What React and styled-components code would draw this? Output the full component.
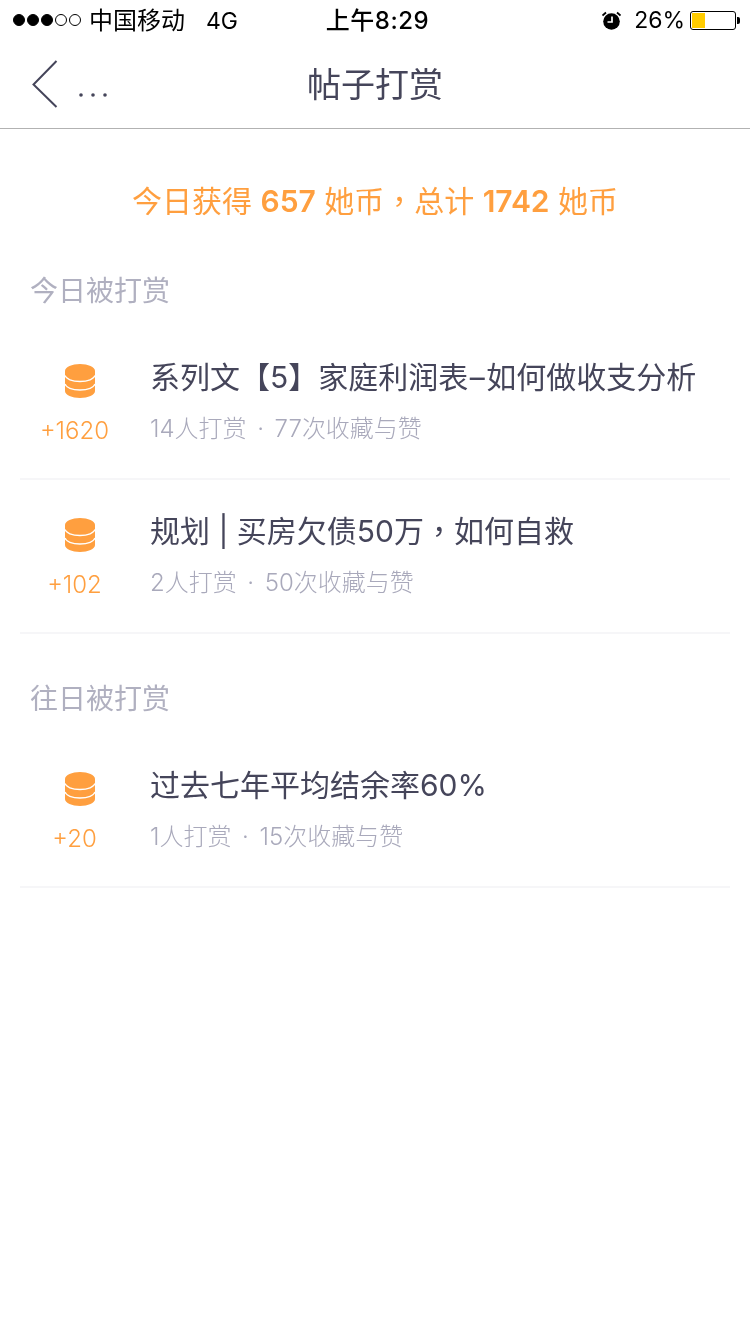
import React from 'react';
import styled, { createGlobalStyle } from 'styled-components';

const GlobalStyle = createGlobalStyle`
  html, body {
    margin: 0;
    padding: 0;
    background: #fff;
  }
  body {
    font-family: Inter, "Noto Sans CJK SC", sans-serif;
    font-weight: 400;
  }
`;

const Page = styled.div`
  width: 750px;
  height: 1334px;
  overflow: hidden;
  will-change: transform;
`;

const StatusBar = styled.div`
  height: 40px;
  box-sizing: border-box;
  padding: 0 14px 4px 13px;
  display: grid;
  grid-template-columns: 1fr auto 1fr;
  align-items: center;
  color: #000;
  font-size: 24px;
`;

const StatusLeft = styled.div`
  display: flex;
  align-items: baseline;
`;

const Signal = styled.div`
  display: flex;
  gap: 2px;
  margin-right: 8px;
  align-self: center;
  margin-top: 4px;
`;

const Dot = styled.span`
  width: 12px;
  height: 12px;
  border-radius: 50%;
  box-sizing: border-box;
  border: 1px solid #000;
  background: ${p => (p.$on ? '#000' : 'transparent')};
`;

const Network = styled.span`
  margin-left: 21px;
  font-size: 23px;
`;

const Clock = styled.div`
  margin-left: 6px;
  font-weight: 500;
  letter-spacing: 0.5px;
`;

const StatusRight = styled.div`
  display: flex;
  align-items: center;
  justify-content: flex-end;
  margin-top: 4px;
`;

const Percent = styled.span`
  margin: 0 5px 0 13px;
  font-size: 23px;
`;

const Battery = styled.div`
  width: 46px;
  height: 19px;
  box-sizing: border-box;
  border: 1px solid #000;
  border-radius: 3px;
  padding: 1px;
  position: relative;
  &::after {
    content: '';
    position: absolute;
    right: -5px;
    top: 5px;
    width: 3px;
    height: 7px;
    background: #000;
    border-radius: 0 2px 2px 0;
  }
`;

const BatteryFill = styled.div`
  width: 13px;
  height: 100%;
  background: #ffcc00;
`;

const NavBar = styled.div`
  height: 88px;
  border-bottom: 1px solid #b2b2b2;
  display: flex;
  align-items: center;
  justify-content: center;
  position: relative;
  color: #45455a;
`;

const NavBack = styled.div`
  position: absolute;
  left: 32px;
  top: 20px;
  display: flex;
  align-items: center;
  gap: 20px;
`;

const MoreDots = styled.svg`
  margin-top: 20px;
`;

const NavTitle = styled.div`
  font-size: 34px;
  line-height: 88px;
  padding-top: 2px;
`;

const Summary = styled.div`
  margin-top: 50px;
  height: 44px;
  line-height: 44px;
  text-align: center;
  font-size: 30px;
  color: #ff9f3f;
  b {
    font-weight: 600;
  }
`;

// the reference sets this comma centred in its cell, as the TC face does
const Comma = styled.span`
  font-family: "Noto Sans CJK TC", sans-serif;
  line-height: 0;
`;

const SectionTitle = styled.div`
  margin: ${p => p.$top}px 0 15px 30px;
  height: 40px;
  line-height: 40px;
  font-size: 28px;
  color: #b0b0c0;
`;

const Row = styled.div`
  margin: 0 20px;
  height: 154px;
  box-sizing: border-box;
  border-bottom: 2px solid #f6f6f8;
  display: flex;
`;

const Reward = styled.div`
  width: 110px;
  padding-top: 38px;
  display: flex;
  flex-direction: column;
  align-items: center;
  color: #ff9f3f;
  font-size: 24px;
  font-weight: 300;
`;

const Coin = styled.svg`
  margin-left: 10px;
`;

const Amount = styled.div`
  margin-top: 16px;
  margin-right: 1px;
  line-height: 34px;
`;

const Info = styled.div`
  margin-left: 20px;
  padding-top: 29px;
`;

const Title = styled.div`
  font-size: 30px;
  line-height: 44px;
  color: #45455a;
  white-space: nowrap;
`;

const Dash = styled.span`
  padding: 0 1.5px;
`;

const Meta = styled.div`
  margin-top: 13px;
  font-size: 24px;
  font-weight: 300;
  line-height: 34px;
  color: #a9a9bb;
  white-space: nowrap;
`;

const Sep = styled.span`
  display: inline-block;
  width: 28px;
  text-align: center;
`;

const CoinIcon = () => (
  <Coin width="30" height="34" viewBox="0 0 30 34">
    <path
      fill="#ff9f3f"
      d="M0 7C0 3 7 0 15 0s15 3 15 7v20c0 4-7 7-15 7S0 31 0 27z"
    />
    <path
      fill="none"
      stroke="#fff"
      strokeWidth="1.3"
      d="M0 11.500c1 3.500 7 6 15 6s14-2.500 15-6M0 20c1 3.500 7 6 15 6s14-2.500 15-6"
    />
  </Coin>
);

const AlarmIcon = () => (
  <svg width="19" height="19" viewBox="0 0 19 19">
    <circle cx="9.500" cy="10.500" r="8.300" fill="#000" />
    <path d="M10 5.500v5.500H5.500" fill="none" stroke="#fff" strokeWidth="1.7" />
    <path d="M.5 4.500L4 1.500M18.500 4.500L15 1.500" stroke="#000" strokeWidth="1.800" />
  </svg>
);

const BackIcon = () => (
  <svg width="26" height="50" viewBox="0 0 26 50">
    <path d="M24.500 1L1.500 24.500 24.500 47" fill="none" stroke="#45455a" strokeWidth="2" />
  </svg>
);

const MoreIcon = () => (
  <MoreDots width="30" height="6" viewBox="0 0 30 6">
    <circle cx="3" cy="3" r="1.800" fill="#45455a" />
    <circle cx="15" cy="3" r="1.800" fill="#45455a" />
    <circle cx="27" cy="3" r="1.800" fill="#45455a" />
  </MoreDots>
);

const today = [
  {
    amount: '+1620',
    title: <>系列文【5】家庭利润表<Dash>–</Dash>如何做收支分析</>,
    stats: ['14人打赏', '77次收藏与赞'],
  },
  {
    amount: '+102',
    title: <>规划 | 买房欠债50万<Comma>，</Comma>如何自救</>,
    stats: ['2人打赏', '50次收藏与赞'],
  },
];

const past = [
  { amount: '+20', title: '过去七年平均结余率60%', stats: ['1人打赏', '15次收藏与赞'] },
];

const RewardRow = ({ item }) => (
  <Row>
    <Reward>
      <CoinIcon />
      <Amount>{item.amount}</Amount>
    </Reward>
    <Info>
      <Title>{item.title}</Title>
      <Meta>
        {item.stats[0]}
        <Sep>·</Sep>
        {item.stats[1]}
      </Meta>
    </Info>
  </Row>
);

export default function App() {
  return (
    <Page>
      <GlobalStyle />
      <StatusBar>
        <StatusLeft>
          <Signal>
            <Dot $on />
            <Dot $on />
            <Dot $on />
            <Dot />
            <Dot />
          </Signal>
          中国移动
          <Network>4G</Network>
        </StatusLeft>
        <Clock>上午8:29</Clock>
        <StatusRight>
          <AlarmIcon />
          <Percent>26%</Percent>
          <Battery>
            <BatteryFill />
          </Battery>
        </StatusRight>
      </StatusBar>
      <NavBar>
        <NavBack>
          <BackIcon />
          <MoreIcon />
        </NavBack>
        <NavTitle>帖子打赏</NavTitle>
      </NavBar>
      <Summary>
        今日获得 <b>657</b> 她币<Comma>，</Comma>总计 <b>1742</b> 她币
      </Summary>
      <SectionTitle $top={48}>今日被打赏</SectionTitle>
      {today.map(item => (
        <RewardRow key={item.amount} item={item} />
      ))}
      <SectionTitle $top={45}>往日被打赏</SectionTitle>
      {past.map(item => (
        <RewardRow key={item.amount} item={item} />
      ))}
    </Page>
  );
}
